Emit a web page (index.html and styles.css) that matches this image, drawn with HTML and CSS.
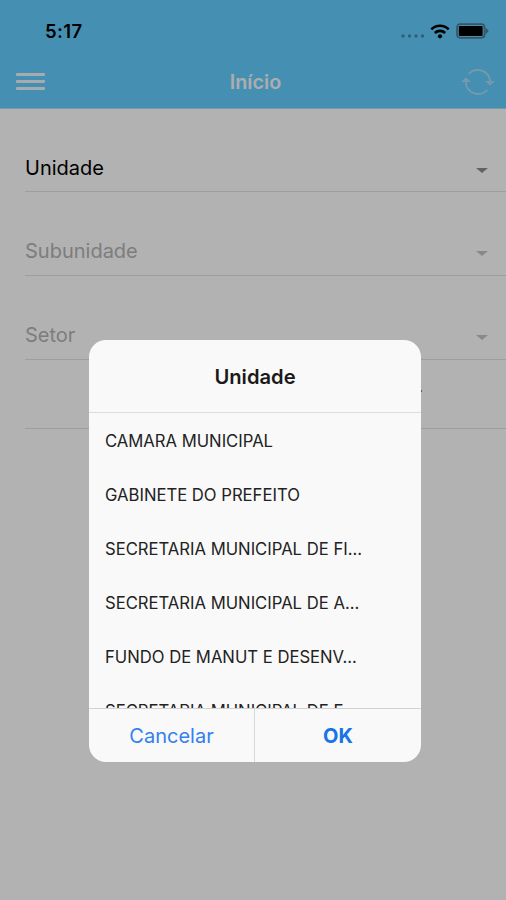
FILE: index.html
```
<!DOCTYPE html>
<html lang="pt-BR">
<head>
    <meta charset="UTF-8">
    <meta name="viewport" content="width=device-width, initial-scale=1.0">
    <title>Início</title>
    <link rel="stylesheet" href="styles.css">
</head>
<body>
    <header class="header">
        <div class="status-bar">
            <span class="time">5:17</span>
            <div class="status-icons">
                <svg class="signal" width="24" height="4" viewBox="0 0 24 4">
                    <circle cx="2" cy="2" r="1.7"/>
                    <circle cx="8.5" cy="2" r="1.7"/>
                    <circle cx="15" cy="2" r="1.7"/>
                    <circle cx="21.5" cy="2" r="1.7"/>
                </svg>
                <svg class="wifi" width="20" height="15" viewBox="0 0 20 15">
                    <path d="M1.3 5.4C6.2.6 13.8.6 18.7 5.4"/>
                    <path d="M4.8 9C7.8 6.2 12.2 6.2 15.2 9"/>
                    <circle cx="10" cy="12.3" r="2.1"/>
                </svg>
                <svg class="battery" width="33" height="16" viewBox="0 0 33 16">
                    <rect class="battery-case" x="1" y="1.2" width="27.5" height="13.6" rx="3"/>
                    <path class="battery-tip" d="M29.5 4.5L32.7 8L29.5 11.5Z"/>
                    <rect x="2.8" y="3" width="23.8" height="10" rx="1"/>
                </svg>
            </div>
        </div>
        <div class="toolbar">
            <button class="menu-button" type="button" aria-label="Menu">
                <span></span><span></span><span></span>
            </button>
            <h1>Início</h1>
            <button class="refresh-button" type="button" aria-label="Atualizar">
                <svg width="34" height="28" viewBox="0 0 34 28">
                    <path d="M7.8 6A12.4 12.4 0 0 1 29.2 13.2"/>
                    <path d="M26.2 22A12.4 12.4 0 0 1 4.8 14"/>
                    <path class="arrow" d="M24 13H34L29 17.5Z"/>
                    <path class="arrow" d="M0 14H10L5 9.5Z"/>
                </svg>
            </button>
        </div>
    </header>

    <main class="form">
        <div class="field">
            <span>Unidade</span>
            <i class="caret"></i>
        </div>
        <div class="field disabled">
            <span>Subunidade</span>
            <i class="caret"></i>
        </div>
        <div class="field disabled">
            <span>Setor</span>
            <i class="caret"></i>
        </div>
        <div class="field search">
            <i class="dot"></i>
        </div>
    </main>

    <div class="backdrop">
        <div class="alert" role="dialog" aria-labelledby="alertTitle">
            <h2 id="alertTitle">Unidade</h2>
            <ul class="options">
                <li>CAMARA MUNICIPAL</li>
                <li>GABINETE DO PREFEITO</li>
                <li>SECRETARIA MUNICIPAL DE FI...</li>
                <li>SECRETARIA MUNICIPAL DE A...</li>
                <li>FUNDO DE MANUT E DESENV...</li>
                <li>SECRETARIA MUNICIPAL DE E...</li>
            </ul>
            <div class="buttons">
                <button type="button">Cancelar</button>
                <button type="button" class="ok">OK</button>
            </div>
        </div>
    </div>
</body>
</html>
```
FILE: styles.css
```
* {
    box-sizing: border-box;
}
body {
    margin: 0;
    height: 100vh;
    overflow: hidden;
    font-family: Inter, "Liberation Sans", sans-serif;
    background-color: #fff;
}
button {
    padding: 0;
    border: 0;
    background: none;
    font-family: inherit;
}
.header {
    height: 109px;
    background-color: #64cfff;
    border-bottom: 1px solid #b5dcec;
}
.status-bar {
    display: flex;
    justify-content: space-between;
    align-items: center;
    height: 56px;
    padding: 6px 17px 0 45px;
}
.time {
    font-size: 18.5px;
    font-weight: 600;
    letter-spacing: 0.4px;
}
.status-icons {
    display: flex;
    align-items: center;
}
.signal {
    margin: 9px 5px 0 0;
    fill: #4787a7;
}
.wifi {
    margin-right: 6px;
}
.wifi path {
    fill: none;
    stroke: #000;
    stroke-width: 2.6;
}
.battery-case {
    fill: #64cfff;
    stroke: #53798b;
    stroke-width: 1.7;
}
.battery-tip {
    fill: #53798b;
}
.toolbar {
    display: grid;
    grid-template-columns: 60px 1fr 60px;
    align-items: center;
    height: 51px;
    padding: 0 11px 0 16px;
}
.toolbar h1 {
    margin: 0;
    text-align: center;
    font-size: 19.8px;
    font-weight: 600;
    color: #f5f8fa;
}
.menu-button {
    display: flex;
    flex-direction: column;
    gap: 4.5px;
    width: 29px;
}
.menu-button span {
    height: 2.5px;
    border-radius: 1px;
    background-color: #edf5f9;
}
.refresh-button {
    display: flex;
    justify-content: flex-end;
}
.refresh-button path {
    fill: none;
    stroke: #a9dcf5;
    stroke-width: 1.8;
}
.refresh-button .arrow {
    fill: #a9dcf5;
    stroke: none;
}

/* Campos */
.form {
    padding-left: 25px;
}
.field {
    display: flex;
    justify-content: space-between;
    align-items: flex-end;
    height: 84px;
    padding: 0 18px 11px 0;
    border-bottom: 1px solid #e3e3e3;
    font-size: 20px;
    line-height: 24px;
    color: #000;
}
.field:first-child {
    height: 83px;
}
.disabled {
    padding-bottom: 12px;
    color: #b4b4b4;
}
.caret {
    margin-bottom: 7px;
    border: 6px solid transparent;
    border-top: 5px solid #8f8f8f;
    border-bottom: 0;
}
.disabled .caret {
    border-top-color: #c4c4c4;
}
.field.search {
    justify-content: flex-end;
    height: 69px;
    padding: 0 84px 36px 0;
}
.dot {
    width: 2px;
    height: 2px;
    background-color: #888;
}

/* Alerta */
.backdrop {
    position: absolute;
    inset: 0;
    padding: 340px 85px 0 89px;
    background-color: rgba(0,0,0,0.3);
}
.alert {
    height: 422px;
    border-radius: 17px;
    overflow: hidden;
    background-color: #f9f9f9;
}
.alert h2 {
    margin: 0;
    height: 73px;
    border-bottom: 1px solid #dcdcdc;
    text-align: center;
    font-size: 20.2px;
    font-weight: 600;
    line-height: 74px;
    color: #1a1a1a;
}
.options {
    margin: 0;
    padding: 0;
    height: 295px;
    overflow: hidden;
    list-style: none;
}
.options li {
    height: 54px;
    padding-left: 16px;
    font-size: 16.65px;
    line-height: 57px;
    white-space: nowrap;
    color: #222;
}
.buttons {
    display: grid;
    grid-template-columns: 165px 1fr;
    height: 54px;
    border-top: 1px solid #d2d2d2;
}
.buttons button {
    font-size: 20px;
    color: #3380f0;
}
.buttons .ok {
    border-left: 1px solid #d8d8d8;
    font-weight: 700;
    color: #1673e8;
}
```
